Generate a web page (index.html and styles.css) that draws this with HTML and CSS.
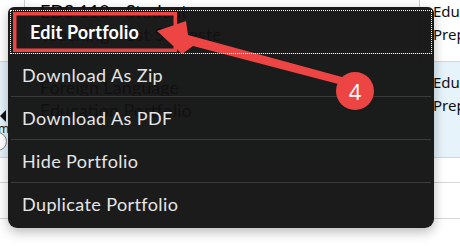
FILE: index.html
```html
<!DOCTYPE html>
<html>
<head>
<meta charset="utf-8">
<link rel="stylesheet" href="styles.css">
</head>
<body>
<div class="page">
  <div class="table">
    <div class="row r1">
      <div class="c c1"></div>
      <div class="c c2"><div class="title">EDS 110 - Student<br>Teaching - 1st Semester</div></div>
      <div class="c c3"></div>
      <div class="c c4"><div class="prog">Education<br>Preparation</div></div>
    </div>
    <div class="row r2">
      <div class="c c1"><span class="tri"></span><span class="m">m</span><span class="ring"></span></div>
      <div class="c c2"><div class="title">Foreign Language<br>Education Portfolio</div></div>
      <div class="c c3"></div>
      <div class="c c4"><div class="prog">Education<br>Preparation</div></div>
    </div>
    <div class="row r3">
      <div class="c c1"></div>
      <div class="c c2"></div>
      <div class="c c3"></div>
      <div class="c c4"></div>
    </div>
    <div class="row r4">
      <div class="c c1"></div>
      <div class="c c2"><span class="na">N/A</span></div>
      <div class="c c3"></div>
      <div class="c c4"></div>
    </div>
  </div>

  <ul class="menu">
    <li class="item active">Edit Portfolio</li>
    <li class="item">Download As Zip</li>
    <li class="item">Download As PDF</li>
    <li class="item">Hide Portfolio</li>
    <li class="item">Duplicate Portfolio</li>
  </ul>

  <svg class="annot" width="460" height="247" viewBox="0 0 460 247">
    <rect x="14.75" y="13.75" width="160.5" height="36.5" fill="none" stroke="#ec4543" stroke-width="3.5"/>
    <path d="M157,31 L186,21 L188,35 L342,77 L342,85 L193,46 L182,54 Z" fill="#ec4543"/>
    <circle cx="355" cy="91" r="19" fill="#ec4543"/>
    <text x="355" y="99.5" class="num" text-anchor="middle">4</text>
  </svg>
</div>
</body>
</html>
```

FILE: styles.css
```css
* { box-sizing: border-box; }

html, body {
  margin: 0;
  padding: 0;
  background: #ffffff;
}

.page {
  position: relative;
  width: 460px;
  height: 247px;
  overflow: hidden;
}

.table {
  display: flex;
  flex-direction: column;
}

.row {
  display: grid;
  grid-template-columns: 25px 195px 200px 40px;
  border-bottom: 1px solid #d6d6d6;
}

.r1 { height: 62px; }
.r2 { height: 96px; background: #e6f3fb; }
.r3 { height: 25px; }
.r4 { height: 36px; }

.c {
  overflow: hidden;
  white-space: nowrap;
}

.r1 .c1 { border-right: 1px solid #d0d0d0; }
.r1 .c3 { border-right: 1px solid #d0d0d0; }

.title {
  font-family: "Lato", sans-serif;
  font-size: 18px;
  line-height: 23px;
  color: #000;
  padding: 0 0 0 15px;
}

.r1 .title { padding-top: 0; }
.r2 .title { padding-top: 14px; }

.prog {
  font-family: "Noto Sans", sans-serif;
  font-size: 15px;
  line-height: 22.5px;
  color: #111;
  padding-left: 13px;
}

.r1 .prog { padding-top: 0; }
.r2 .prog { padding-top: 9px; }

.r2 .c1 {
  position: relative;
}

.tri {
  position: absolute;
  left: 0;
  top: 48px;
  width: 0;
  height: 0;
  border-top: 6px solid transparent;
  border-bottom: 6px solid transparent;
  border-right: 6px solid #111;
}

.m {
  position: absolute;
  left: -2px;
  top: 58px;
  font-family: "Noto Sans", sans-serif;
  font-size: 12px;
  color: #222;
}

.ring {
  position: absolute;
  left: -12px;
  top: 70px;
  width: 19px;
  height: 19px;
  border: 1px solid #888;
  border-radius: 50%;
  background: #fff;
}

.na {
  display: block;
  font-family: "Lato", sans-serif;
  font-size: 16px;
  color: #111;
  padding: 10px 0 0 0;
  margin-left: -18px;
}

.menu {
  position: absolute;
  left: 8px;
  top: 7px;
  width: 426px;
  margin: 0;
  padding: 4px 3px 3px 3px;
  list-style: none;
  background: rgba(18, 18, 18, 0.96);
  border-radius: 6px 6px 9px 9px;
  box-shadow: 0 4px 12px rgba(0, 0, 0, 0.28);
  font-family: "Lato", sans-serif;
}

.item {
  height: 42px;
  display: flex;
  align-items: center;
  padding-left: 11px;
  font-size: 18px;
  letter-spacing: 0.4px;
  color: #e6e6e6;
}

.item + .item {
  height: 43px;
  border-top: 1px solid #3a3a3a;
}

.item.active {
  font-weight: bold;
  letter-spacing: 0.2px;
  color: #ffffff;
  padding-left: 19px;
  outline: 1px dotted #ffffff;
  outline-offset: 0;
  position: relative;
  z-index: 1;
}

.annot {
  position: absolute;
  left: 0;
  top: 0;
  pointer-events: none;
}

.num {
  font-family: "Open Sans", sans-serif;
  font-size: 22px;
  fill: #ffffff;
}
```
